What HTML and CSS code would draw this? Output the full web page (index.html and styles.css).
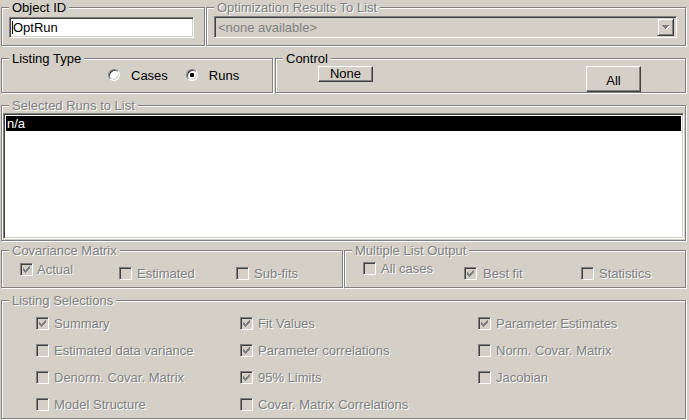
FILE: index.html
```html
<!DOCTYPE html>
<html>
<head>
<meta charset="utf-8">
<title>Listing</title>
<link rel="stylesheet" href="styles.css">
</head>
<body>
<div class="dlg">
  <div class="row r1">
    <div class="group g-objid">
      <span class="title">Object ID</span>
      <div class="edit"><span class="caret"></span><span>OptRun</span></div>
    </div>
    <div class="group g-opt">
      <span class="title dis">Optimization Results To List</span>
      <div class="combo">
        <span class="combo-text">&lt;none available&gt;</span>
        <span class="combo-btn"><svg width="8" height="5" viewBox="0 0 8 5"><path d="M1 1h7v1H1zM2 2h5v1H2zM3 3h3v1H3zM4 4h1v1H4z" fill="#fff"/><path d="M0 0h7v1H0zM1 1h5v1H1zM2 2h3v1H2zM3 3h1v1H3z" fill="#808080"/></svg></span>
      </div>
    </div>
  </div>

  <div class="row r2">
    <div class="group g-lt">
      <span class="title">Listing Type</span>
      <div class="radios">
        <span class="radio"></span><span class="rlabel lab-cases">Cases</span>
        <span class="radio on"></span><span class="rlabel">Runs</span>
      </div>
    </div>
    <div class="group g-ctl">
      <span class="title">Control</span>
      <div class="btn btn-none">None</div>
      <div class="btn btn-all">All</div>
    </div>
  </div>

  <div class="row r3">
    <div class="group g-runs">
      <span class="title dis">Selected Runs to List</span>
      <div class="listbox">
        <div class="sel">n/a</div>
      </div>
    </div>
  </div>

  <div class="row r4">
    <div class="group g-cov">
      <span class="title dis">Covariance Matrix</span>
      <div class="checks">
        <div class="chk w-actual"><span class="box"><svg width="7" height="7" viewBox="0 0 7 7"><path d="M0 2h1v3H0zM1 3h1v3H1zM2 4h1v3H2zM3 3h1v3H3zM4 2h1v3H4zM5 1h1v3H5zM6 0h1v3H6z" fill="#808080"/></svg></span><span class="dis">Actual</span></div>
        <div class="chk low w-est"><span class="box"></span><span class="dis">Estimated</span></div>
        <div class="chk low"><span class="box"></span><span class="dis">Sub-fits</span></div>
      </div>
    </div>
    <div class="group g-mlo">
      <span class="title dis">Multiple List Output</span>
      <div class="checks checks-mlo">
        <div class="chk w-all"><span class="box"></span><span class="dis">All cases</span></div>
        <div class="chk low w-best"><span class="box"><svg width="7" height="7" viewBox="0 0 7 7"><path d="M0 2h1v3H0zM1 3h1v3H1zM2 4h1v3H2zM3 3h1v3H3zM4 2h1v3H4zM5 1h1v3H5zM6 0h1v3H6z" fill="#808080"/></svg></span><span class="dis">Best fit</span></div>
        <div class="chk low"><span class="box"></span><span class="dis">Statistics</span></div>
      </div>
    </div>
  </div>

  <div class="row r5">
    <div class="group g-ls">
      <span class="title dis">Listing Selections</span>
      <div class="grid">
        <div class="chk"><span class="box"><svg width="7" height="7" viewBox="0 0 7 7"><path d="M0 2h1v3H0zM1 3h1v3H1zM2 4h1v3H2zM3 3h1v3H3zM4 2h1v3H4zM5 1h1v3H5zM6 0h1v3H6z" fill="#808080"/></svg></span><span class="dis">Summary</span></div>
        <div class="chk"><span class="box"><svg width="7" height="7" viewBox="0 0 7 7"><path d="M0 2h1v3H0zM1 3h1v3H1zM2 4h1v3H2zM3 3h1v3H3zM4 2h1v3H4zM5 1h1v3H5zM6 0h1v3H6z" fill="#808080"/></svg></span><span class="dis">Fit Values</span></div>
        <div class="chk"><span class="box"><svg width="7" height="7" viewBox="0 0 7 7"><path d="M0 2h1v3H0zM1 3h1v3H1zM2 4h1v3H2zM3 3h1v3H3zM4 2h1v3H4zM5 1h1v3H5zM6 0h1v3H6z" fill="#808080"/></svg></span><span class="dis">Parameter Estimates</span></div>

        <div class="chk"><span class="box"></span><span class="dis">Estimated data variance</span></div>
        <div class="chk"><span class="box"><svg width="7" height="7" viewBox="0 0 7 7"><path d="M0 2h1v3H0zM1 3h1v3H1zM2 4h1v3H2zM3 3h1v3H3zM4 2h1v3H4zM5 1h1v3H5zM6 0h1v3H6z" fill="#808080"/></svg></span><span class="dis">Parameter correlations</span></div>
        <div class="chk"><span class="box"></span><span class="dis">Norm. Covar. Matrix</span></div>

        <div class="chk"><span class="box"></span><span class="dis">Denorm. Covar. Matrix</span></div>
        <div class="chk"><span class="box"><svg width="7" height="7" viewBox="0 0 7 7"><path d="M0 2h1v3H0zM1 3h1v3H1zM2 4h1v3H2zM3 3h1v3H3zM4 2h1v3H4zM5 1h1v3H5zM6 0h1v3H6z" fill="#808080"/></svg></span><span class="dis">95% Limits</span></div>
        <div class="chk"><span class="box"></span><span class="dis">Jacobian</span></div>

        <div class="chk"><span class="box"></span><span class="dis">Model Structure</span></div>
        <div class="chk"><span class="box"></span><span class="dis">Covar. Matrix Correlations</span></div>
        <div class="chk"></div>
      </div>
    </div>
  </div>
</div>
</body>
</html>
```

FILE: styles.css
```css
html, body {
  margin: 0;
  padding: 0;
  background: #d4d0c8;
}

body {
  font-family: "Liberation Sans", Arial, sans-serif;
  font-size: 13px;
  line-height: 13px;
  color: #000;
}

.dlg {
  width: 689px;
  height: 420px;
  overflow: hidden;
  box-sizing: border-box;
  padding-left: 1px;
  display: flex;
  flex-direction: column;
}

.row {
  display: flex;
  gap: 1px;
}

.r1 { margin-top: 7px; }
.r2 { margin-top: 12px; gap: 2px; }
.r3 { margin-top: 12px; }
.r4 { margin-top: 9px; }
.r5 { margin-top: 12px; }

.group {
  position: relative;
  box-sizing: border-box;
  border: 1px solid #808080;
  box-shadow: inset 1px 1px 0 #fff, 1px 1px 0 #fff;
}

.title {
  position: absolute;
  top: -7px;
  left: 7px;
  padding: 0 3px;
  background: #d4d0c8;
  white-space: nowrap;
}

.dis {
  color: #808080;
  text-shadow: 1px 1px 0 #fff;
}

/* Row 1 */
.g-objid {
  width: 204px;
  height: 39px;
  padding: 9px 0 0 7px;
}

.edit {
  box-sizing: border-box;
  width: 185px;
  height: 21px;
  background: #fff;
  border: 1px solid;
  border-color: #808080 #fff #fff #808080;
  box-shadow: inset 1px 1px 0 #404040, inset -1px -1px 0 #d4d0c8;
  display: flex;
  align-items: center;
  padding-left: 2px;
}

.caret {
  width: 1px;
  height: 13px;
  background: #000;
  margin-right: 0;
}

.g-opt {
  width: 480px;
  height: 39px;
  padding: 8px 0 0 7px;
}

.combo {
  box-sizing: border-box;
  width: 463px;
  height: 22px;
  background: #d4d0c8;
  border: 1px solid;
  border-color: #808080 #fff #fff #808080;
  box-shadow: inset 1px 1px 0 #404040, inset -1px -1px 0 #d4d0c8;
  display: flex;
  align-items: center;
  padding: 0 2px 0 3px;
}

.combo-text {
  flex: 1;
  color: #808080;
}

.combo-btn {
  box-sizing: border-box;
  width: 17px;
  height: 18px;
  background: #d4d0c8;
  border: 1px solid;
  border-color: #d4d0c8 #404040 #404040 #d4d0c8;
  box-shadow: inset 1px 1px 0 #fff, inset -1px -1px 0 #808080;
  display: flex;
  align-items: center;
  justify-content: center;
  padding-top: 1px;
}

.combo-btn svg { display: block; }

/* Row 2 */
.g-lt {
  width: 272px;
  height: 35px;
  padding: 10px 0 0 106px;
}

.radios {
  display: flex;
  align-items: center;
  height: 12px;
}

.radio {
  box-sizing: border-box;
  width: 12px;
  height: 12px;
  border-radius: 50%;
  background: #fff;
  border: 1px solid;
  border-color: #808080 #fff #fff #808080;
  box-shadow: inset 1px 1px 0 #404040, inset -1px -1px 0 #d4d0c8;
  display: flex;
  align-items: center;
  justify-content: center;
  flex: none;
}

.radio.on::after {
  content: "";
  width: 4px;
  height: 4px;
  border-radius: 1px;
  background: #000;
}

.rlabel {
  margin-left: 11px;
  padding-top: 1px;
}

.lab-cases { margin-right: 18px; }

.g-ctl {
  width: 411px;
  height: 35px;
  padding: 7px 44px 0 42px;
  display: flex;
  align-items: flex-start;
}

.btn {
  box-sizing: border-box;
  width: 55px;
  background: #d4d0c8;
  border: 1px solid;
  border-color: #fff #404040 #404040 #fff;
  box-shadow: inset -1px -1px 0 #808080;
  display: flex;
  align-items: center;
  justify-content: center;
}

.btn-none { height: 16px; padding-bottom: 1px; }
.btn-all { height: 26px; margin-left: auto; padding-top: 2px; }

/* Row 3 */
.g-runs {
  width: 685px;
  height: 136px;
  padding: 7px 0 0 1px;
}

.listbox {
  box-sizing: border-box;
  width: 681px;
  height: 126px;
  background: #fff;
  border: 1px solid;
  border-color: #808080 #fff #fff #808080;
  box-shadow: inset 1px 1px 0 #404040, inset -1px -1px 0 #d4d0c8;
  padding: 2px 2px 0 2px;
}

.sel {
  height: 15px;
  line-height: 15px;
  background: #000;
  color: #fff;
  padding-left: 1px;
}

/* Row 4 */
.g-cov, .g-mlo {
  width: 342px;
  height: 38px;
}

.g-cov { padding: 12px 0 0 18px; }
.g-mlo { padding: 11px 0 0 18px; }

.checks {
  display: flex;
  align-items: flex-start;
}

.chk {
  display: flex;
  align-items: flex-start;
  gap: 5px;
  white-space: nowrap;
}

.chk.low { margin-top: 4px; }
.checks-mlo .chk.low { margin-top: 5px; }

.w-actual { width: 99px; gap: 4px; }
.w-est { width: 117px; }
.w-all { width: 101px; }
.w-best { width: 117px; gap: 6px; }

.box {
  box-sizing: border-box;
  width: 13px;
  height: 13px;
  flex: none;
  background: #d4d0c8;
  border: 1px solid;
  border-color: #808080 #fff #fff #808080;
  box-shadow: inset 1px 1px 0 #404040, inset -1px -1px 0 #d4d0c8;
  padding: 2px;
}

.box svg { display: block; }

/* Row 5 */
.g-ls {
  width: 685px;
  height: 119px;
  padding: 16px 0 0 34px;
}

.grid {
  display: grid;
  grid-template-columns: 204px 238px 1fr;
  grid-auto-rows: 27px;
}
```
